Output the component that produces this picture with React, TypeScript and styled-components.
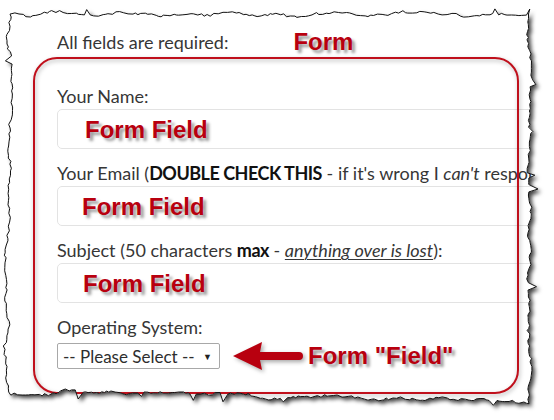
import React from 'react';
import styled, { createGlobalStyle } from 'styled-components';

const GlobalStyle = createGlobalStyle`
  html, body {
    margin: 0;
    padding: 0;
    background: #ffffff;
  }
`;

type Pt = { x: number; y: number };

function mulberry32 (seed: number): () => number {
  let a = seed;
  return () => {
    a |= 0;
    a = (a + 0x6d2b79f5) | 0;
    let t = Math.imul(a ^ (a >>> 15), 1 | a);
    t = (t + Math.imul(t ^ (t >>> 7), 61 | t)) ^ t;
    return ((t ^ (t >>> 14)) >>> 0) / 4294967296;
  };
}

// one torn side: walks from a to b, pushing points off the line along its outward normal
function tornSide (a: Pt, b: Pt, amp: number, rand: () => number): Pt[] {
  const dx = b.x - a.x;
  const dy = b.y - a.y;
  const len = Math.hypot(dx, dy);
  const nx = dy / len;
  const ny = -dx / len;
  const knotGap = 22;
  const knots = Array.from({ length: Math.ceil(len / knotGap) + 2 }, () => rand() * 2 - 1);
  const pts: Pt[] = [];
  let d = 0;
  while (d < len) {
    const k = d / knotGap;
    const i = Math.floor(k);
    const f = (1 - Math.cos((k - i) * Math.PI)) / 2;
    const smooth = knots[i] * (1 - f) + knots[i + 1] * f;
    let off = smooth * amp + (rand() - 0.5) * 2.6;
    if (rand() < 0.04) off += 4 + rand() * 5;
    const t = d / len;
    pts.push({ x: a.x + dx * t + nx * off, y: a.y + dy * t + ny * off });
    d += 2 + rand() * 3;
  }
  return pts;
}

const rand = mulberry32(91);
const corners: Pt[] = [
  { x: 10, y: 14 },
  { x: 530, y: 14 },
  { x: 529, y: 401 },
  { x: 7, y: 392 },
];
const tornEdge: Pt[] = corners.flatMap((c, i) => tornSide(c, corners[(i + 1) % 4], 3, rand));
const svgPoints = tornEdge.map((p) => `${p.x.toFixed(1)},${p.y.toFixed(1)}`).join(' ');
const clipPolygon = `polygon(${tornEdge.map((p) => `${p.x.toFixed(1)}px ${p.y.toFixed(1)}px`).join(', ')})`;

const RED = '#b8000f';

const Stage = styled.div`
  position: relative;
  width: 554px;
  height: 420px;
  overflow: hidden;
  background: #ffffff;
`;

const EdgeArt = styled.svg`
  position: absolute;
  inset: 0;
  pointer-events: none;
`;

const Paper = styled.div<{ $clip: string }>`
  position: relative;
  box-sizing: border-box;
  width: 554px;
  height: 420px;
  padding: 30px 0 0 33px;
  clip-path: ${({ $clip }) => $clip};
  font-family: Lato, 'Open Sans', sans-serif;
  font-size: 18px;
  color: #363636;
`;

const HeaderRow = styled.div`
  display: flex;
  align-items: center;
  height: 24px;
  padding-left: 24px;
  gap: 65px;
  white-space: nowrap;
`;

const Note = styled.span`
  font-family: 'Liberation Sans', Arial, sans-serif;
  font-weight: 700;
  font-size: 24px;
  line-height: 1;
  color: ${RED};
  text-shadow: 3px 3px 3px rgba(0, 0, 0, 0.4);
  white-space: nowrap;
`;

const FieldNote = styled(Note)<{ $inset: number }>`
  margin-left: ${({ $inset }) => $inset}px;
  margin-top: 2px;
`;

const RedBox = styled.div`
  position: relative;
  box-sizing: border-box;
  width: 486px;
  margin-top: 3px;
  padding: 27px 0 22px 24px;
  display: flex;
  flex-direction: column;
  gap: 12px;

  &::after {
    content: '';
    position: absolute;
    inset: 0;
    border: 2px solid #c0101c;
    border-radius: 24px;
    filter: drop-shadow(1px 2px 2px rgba(0, 0, 0, 0.3));
    pointer-events: none;
  }
`;

const FieldGroup = styled.div`
  display: flex;
  flex-direction: column;
  gap: 1px;
`;

const Label = styled.div`
  line-height: 24px;
  white-space: nowrap;

  b {
    color: #111111;
    letter-spacing: -0.5px;
  }

  i {
    font-style: italic;
  }

  u {
    text-decoration-thickness: 1px;
    text-underline-offset: 2px;
  }
`;

const FieldBox = styled.div`
  box-sizing: border-box;
  width: 500px;
  height: 40px;
  border: 1px solid #e3e3e3;
  border-radius: 5px;
  background: #ffffff;
  display: flex;
  align-items: center;
`;

const SelectRow = styled.div`
  display: flex;
  align-items: center;
`;

const SelectBox = styled.div`
  box-sizing: border-box;
  width: 163px;
  height: 26px;
  border: 1px solid #a8a8a8;
  border-radius: 2px;
  padding: 0 7px 0 5px;
  display: flex;
  align-items: center;
  justify-content: space-between;
  color: #2e2e2e;
  font-size: 17px;
  line-height: 1;
  white-space: nowrap;
`;

const Caret = styled.span`
  font-size: 9px;
  color: #222222;
`;

const Arrow = styled.svg`
  margin-left: 12px;
  margin-right: 4px;
  filter: drop-shadow(2px 2px 2px rgba(0, 0, 0, 0.35));
`;

const fields = [
  { label: <>Your Name:</>, inset: 27 },
  {
    label: (
      <>
        Your Email (<b>DOUBLE CHECK THIS</b> - if it&#39;s wrong I <i>can&#39;t</i> respond to you!)
      </>
    ),
    inset: 24,
  },
  {
    label: (
      <>
        Subject (50 characters <b>max</b> - <u><i>anything over is lost</i></u>):
      </>
    ),
    inset: 25,
  },
];

export default function App (): React.ReactElement {
  return (
    <>
      <GlobalStyle />
      <Stage>
        <EdgeArt width='554' height='420' viewBox='0 0 554 420'>
          <defs>
            <filter id='tornShadow' x='-5%' y='-5%' width='115%' height='115%'>
              <feDropShadow dx='3' dy='3' stdDeviation='2' floodColor='#000' floodOpacity='0.75' />
            </filter>
          </defs>
          <polygon points={svgPoints} fill='#ffffff' filter='url(#tornShadow)' />
        </EdgeArt>
        <Paper $clip={clipPolygon}>
          <HeaderRow>
            <span>All fields are required:</span>
            <Note>Form</Note>
          </HeaderRow>
          <RedBox>
            {fields.map((f, i) => (
              <FieldGroup key={i}>
                <Label>{f.label}</Label>
                <FieldBox>
                  <FieldNote $inset={f.inset}>Form Field</FieldNote>
                </FieldBox>
              </FieldGroup>
            ))}
            <FieldGroup>
              <Label>Operating System:</Label>
              <SelectRow>
                <SelectBox>
                  <span>-- Please Select --</span>
                  <Caret>▼</Caret>
                </SelectBox>
                <Arrow width='72' height='32' viewBox='0 0 72 32'>
                  <path d='M1 16 L30 2 L28 12 L67 12 A4 4 0 0 1 67 20 L28 20 L30 30 Z' fill={RED} />
                </Arrow>
                <Note>Form &quot;Field&quot;</Note>
              </SelectRow>
            </FieldGroup>
          </RedBox>
        </Paper>
        <EdgeArt width='554' height='420' viewBox='0 0 554 420'>
          <polygon points={svgPoints} fill='none' stroke='#111' strokeWidth='1' strokeLinejoin='round' />
        </EdgeArt>
      </Stage>
    </>
  );
}
